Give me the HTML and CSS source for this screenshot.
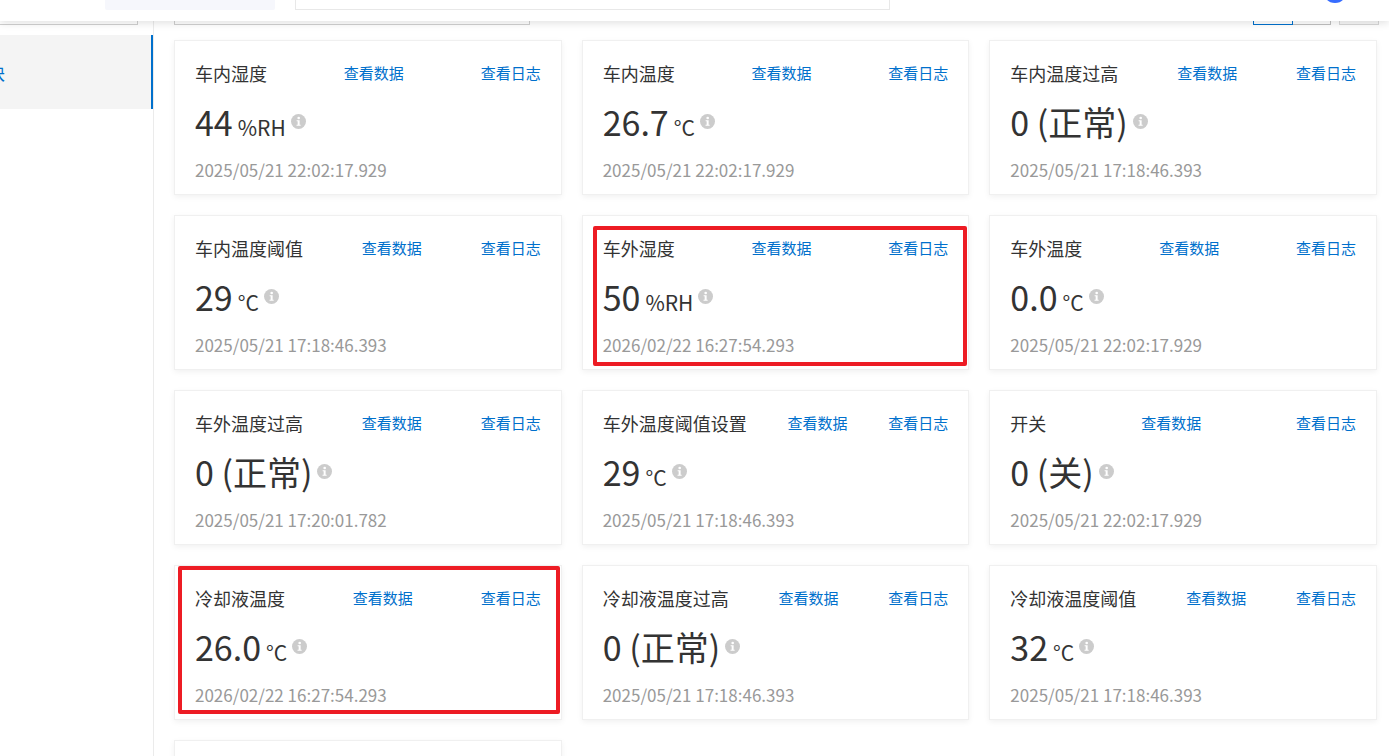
FILE: index.html
```html
<!DOCTYPE html>
<html lang="zh-CN">
<head>
  <meta charset="UTF-8">
  <meta name="viewport" content="width=device-width, initial-scale=1.0">
  <title>物模型数据</title>
  <link rel="stylesheet" href="styles.css">
</head>
<body>
  <svg width="0" height="0" class="sprite">
    <symbol id="info" viewBox="0 0 16 16">
      <circle cx="8" cy="8" r="8" fill="#ccc"/>
      <circle cx="8.2" cy="4.2" r="1.4" fill="#fff"/>
      <path d="M6 6.6h3.2v4.9h1.1v1H5.9v-1h1.2V7.6H6z" fill="#fff"/>
    </symbol>
  </svg>

  <header class="topbar">
    <div class="topbar-menu"></div>
    <input class="topbar-search" type="text" aria-label="搜索">
    <span class="avatar"></span>
  </header>

  <div class="layout">
    <aside class="sidebar">
      <input class="sidebar-search" type="text" aria-label="搜索模块">
      <a class="module active" href="#"><span>块</span></a>
    </aside>

    <main class="content">
      <div class="toolbar">
        <input class="filter" type="text" aria-label="筛选">
        <button class="view-btn selected" type="button" aria-label="卡片"></button>
        <button class="view-btn" type="button" aria-label="列表"></button>
        <button class="refresh-btn" type="button" aria-label="刷新"></button>
      </div>

      <div class="cards">
        <div class="card">
          <div class="card-head"><span class="name">车内湿度</span><a href="#">查看数据</a><a href="#">查看日志</a></div>
          <div class="value">44<span class="unit">%RH</span><svg class="info"><use href="#info"/></svg></div>
          <div class="time">2025/05/21 22:02:17.929</div>
        </div>
        <div class="card">
          <div class="card-head"><span class="name">车内温度</span><a href="#">查看数据</a><a href="#">查看日志</a></div>
          <div class="value">26.7<span class="unit">°C</span><svg class="info"><use href="#info"/></svg></div>
          <div class="time">2025/05/21 22:02:17.929</div>
        </div>
        <div class="card">
          <div class="card-head"><span class="name">车内温度过高</span><a href="#">查看数据</a><a href="#">查看日志</a></div>
          <div class="value">0 (正常)<svg class="info"><use href="#info"/></svg></div>
          <div class="time">2025/05/21 17:18:46.393</div>
        </div>

        <div class="card">
          <div class="card-head"><span class="name">车内温度阈值</span><a href="#">查看数据</a><a href="#">查看日志</a></div>
          <div class="value">29<span class="unit">°C</span><svg class="info"><use href="#info"/></svg></div>
          <div class="time">2025/05/21 17:18:46.393</div>
        </div>
        <div class="card">
          <div class="card-head"><span class="name">车外湿度</span><a href="#">查看数据</a><a href="#">查看日志</a></div>
          <div class="value">50<span class="unit">%RH</span><svg class="info"><use href="#info"/></svg></div>
          <div class="time">2026/02/22 16:27:54.293</div>
          <div class="mark mark-humidity"></div>
        </div>
        <div class="card">
          <div class="card-head"><span class="name">车外温度</span><a href="#">查看数据</a><a href="#">查看日志</a></div>
          <div class="value">0.0<span class="unit">°C</span><svg class="info"><use href="#info"/></svg></div>
          <div class="time">2025/05/21 22:02:17.929</div>
        </div>

        <div class="card">
          <div class="card-head"><span class="name">车外温度过高</span><a href="#">查看数据</a><a href="#">查看日志</a></div>
          <div class="value">0 (正常)<svg class="info"><use href="#info"/></svg></div>
          <div class="time">2025/05/21 17:20:01.782</div>
        </div>
        <div class="card">
          <div class="card-head"><span class="name">车外温度阈值设置</span><a href="#">查看数据</a><a href="#">查看日志</a></div>
          <div class="value">29<span class="unit">°C</span><svg class="info"><use href="#info"/></svg></div>
          <div class="time">2025/05/21 17:18:46.393</div>
        </div>
        <div class="card">
          <div class="card-head"><span class="name">开关</span><a href="#">查看数据</a><a href="#">查看日志</a></div>
          <div class="value">0 (关)<svg class="info"><use href="#info"/></svg></div>
          <div class="time">2025/05/21 22:02:17.929</div>
        </div>

        <div class="card">
          <div class="card-head"><span class="name">冷却液温度</span><a href="#">查看数据</a><a href="#">查看日志</a></div>
          <div class="value">26.0<span class="unit">°C</span><svg class="info"><use href="#info"/></svg></div>
          <div class="time">2026/02/22 16:27:54.293</div>
          <div class="mark mark-coolant"></div>
        </div>
        <div class="card">
          <div class="card-head"><span class="name">冷却液温度过高</span><a href="#">查看数据</a><a href="#">查看日志</a></div>
          <div class="value">0 (正常)<svg class="info"><use href="#info"/></svg></div>
          <div class="time">2025/05/21 17:18:46.393</div>
        </div>
        <div class="card">
          <div class="card-head"><span class="name">冷却液温度阈值</span><a href="#">查看数据</a><a href="#">查看日志</a></div>
          <div class="value">32<span class="unit">°C</span><svg class="info"><use href="#info"/></svg></div>
          <div class="time">2025/05/21 17:18:46.393</div>
        </div>

        <div class="card"></div>
      </div>
    </main>
  </div>
</body>
</html>
```

FILE: styles.css
```css
* {
  box-sizing: border-box;
}
html {
  height: 100%;
  overflow: hidden;
}
body {
  margin: 0;
  height: 100%;
  overflow: hidden;
  background: #fff;
  color: #333;
  font-family: "Noto Sans CJK SC", sans-serif;
}
a {
  color: #0070cc;
  text-decoration: none;
}
input,
button {
  margin: 0;
  padding: 0;
  border-radius: 0;
  background: #fff;
}
.sprite {
  position: absolute;
}

/* header, partly scrolled out of view */
.topbar {
  position: fixed;
  top: -39px;
  left: 0;
  right: 0;
  z-index: 10;
  height: 60px;
  padding: 0 42px 0 105px;
  display: flex;
  align-items: center;
  gap: 20px;
  background: #fff;
  box-shadow: 0 2px 8px rgba(0,0,0,0.12);
}
.topbar-menu {
  width: 170px;
  height: 38px;
  border-radius: 2px;
  background: #f6f7fc;
}
.topbar-search {
  width: 595px;
  height: 38px;
  border: 1px solid #e8e8e8;
}
.avatar {
  width: 24px;
  height: 24px;
  margin-left: auto;
  border-radius: 50%;
  background: #366cff;
}

.layout {
  display: flex;
  min-height: 100%;
}
.sidebar {
  width: 154px;
  flex: none;
  border-right: 1px solid #ebebeb;
}
.sidebar-search {
  display: block;
  width: 138px;
  height: 25px;
  margin-bottom: 10px;
  border: 1px solid #d0d0d0;
  border-left: none;
}
.module {
  display: flex;
  align-items: center;
  height: 74px;
  font-size: 18px;
}
.module.active {
  background: #f4f4f4;
  border-right: 2px solid #0070cc;
}
.module span {
  margin-left: -13px;
}

.content {
  flex: 1;
  padding: 0 10px 0 20px;
}
.toolbar {
  display: flex;
  height: 25px;
  margin-bottom: 15px;
}
.filter {
  width: 356px;
  margin-right: auto;
  border: 1px solid #d0d0d0;
}
.view-btn {
  width: 38px;
  border: 1px solid #c0c0c0;
  border-left: none;
}
.view-btn.selected {
  width: 40px;
  border: 1px solid #0070cc;
}
.refresh-btn {
  width: 40px;
  margin-left: 8px;
  border: 1px solid #d8d8d8;
  background: #f7f7f7;
}

.cards {
  display: grid;
  grid-template-columns: repeat(3, 1fr);
  gap: 20px;
  padding-right: 2px;
}
.card {
  position: relative;
  min-height: 155px;
  padding: 20px 20px 10px;
  border: 1px solid #f0f0f0;
  box-shadow: 0 2px 6px rgba(0,0,0,0.06);
}
.card-head {
  display: flex;
  justify-content: space-between;
  align-items: center;
  height: 24px;
  font-size: 15px;
  line-height: 24px;
}
.name {
  font-size: 18px;
}
.value {
  height: 50px;
  margin: 12px 0 11px;
  font-size: 34px;
  line-height: 50px;
  white-space: nowrap;
}
.unit {
  margin-left: 5px;
  font-size: 21px;
}
.info {
  width: 15px;
  height: 15px;
  margin-left: 5px;
  vertical-align: 7px;
}
.time {
  font-size: 17px;
  line-height: 24px;
  color: #999;
}

/* red frames over the cards */
.mark {
  position: absolute;
  border: 4px solid #ed1c24;
  border-radius: 2px;
}
.mark-humidity {
  inset: 10px 1px 3px 10px;
}
.mark-coolant {
  inset: 0 1px 5px 3px;
}
```
